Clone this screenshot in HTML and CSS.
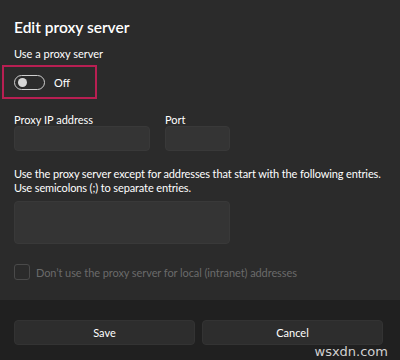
FILE: index.html
```html
<!DOCTYPE html>
<html>
<head>
<meta charset="utf-8">
<link rel="stylesheet" href="styles.css">
</head>
<body>
<div class="dialog">
  <div class="content">
    <h1 class="title">Edit proxy server</h1>
    <div class="label first">Use a proxy server</div>
    <div class="highlight">
      <div class="toggle"><span class="knob"></span></div>
      <span class="toggle-text">Off</span>
    </div>
    <div class="fields">
      <div class="field">
        <div class="label">Proxy IP address</div>
        <div class="input ip"></div>
      </div>
      <div class="field">
        <div class="label">Port</div>
        <div class="input port"></div>
      </div>
    </div>
    <p class="desc">Use the proxy server except for addresses that start with the following entries.<br>Use semicolons (;) to separate entries.</p>
    <div class="input big"></div>
    <div class="check-row">
      <span class="checkbox"></span>
      <span class="check-text">Don’t use the proxy server for local (intranet) addresses</span>
    </div>
  </div>
  <div class="footer">
    <div class="btn">Save</div>
    <div class="btn">Cancel</div>
    <span class="watermark">wsxdn.com</span>
  </div>
</div>
</body>
</html>
```
FILE: styles.css
```css
html, body {
  margin: 0;
  padding: 0;
  background: #2b2b2b;
}
body {
  width: 400px;
  height: 360px;
  overflow: hidden;
  font-family: Lato, "Open Sans", sans-serif;
  color: #ffffff;
}
.dialog {
  display: flex;
  flex-direction: column;
  height: 360px;
}
.content {
  flex: 0 0 300px;
  box-sizing: border-box;
  padding: 17px 14px 0 14px;
  display: flex;
  flex-direction: column;
}
.title {
  margin: 0;
  font-size: 15.5px;
  font-weight: 600;
  line-height: 20px;
}
.label {
  font-size: 11px;
  line-height: 12px;
}
.label.first {
  margin-top: 11px;
}
.highlight {
  margin: 5px 0 0 -12px;
  width: 81px;
  height: 30px;
  border: 2px solid #b81f52;
  display: flex;
  align-items: center;
  padding-left: 10px;
  gap: 9px;
}
.toggle {
  position: relative;
  width: 29px;
  height: 13px;
  border: 1px solid #cfcfcf;
  border-radius: 8px;
  box-sizing: content-box;
}
.knob {
  position: absolute;
  left: 3px;
  top: 2px;
  width: 9px;
  height: 9px;
  border-radius: 50%;
  background: #d6d6d6;
}
.toggle-text {
  font-size: 11px;
}
.fields {
  display: flex;
  gap: 15px;
  margin-top: 15px;
}
.input {
  background: #343434;
  border: 1px solid #393939;
  border-radius: 4px;
  box-sizing: border-box;
}
.ip { width: 136px; height: 25px; }
.port { width: 65px; height: 25px; }
.desc {
  margin: 16px 0 0 0;
  font-size: 11px;
  line-height: 14px;
  letter-spacing: -0.12px;
  white-space: nowrap;
}
.big {
  width: 216px;
  height: 43px;
  margin-top: 6px;
}
.check-row {
  display: flex;
  align-items: center;
  gap: 6px;
  margin-top: 20px;
}
.checkbox {
  width: 16px;
  height: 16px;
  box-sizing: border-box;
  border: 1px solid #4a4a4a;
  border-radius: 3px;
}
.check-text {
  font-size: 11px;
  color: #6a6a6a;
  letter-spacing: -0.08px;
}
.footer {
  position: relative;
  flex: 1;
  background: #202020;
  display: flex;
  gap: 7px;
  padding: 20px 17px 0 14px;
  box-sizing: border-box;
}
.btn {
  flex: 1;
  height: 25px;
  background: #2d2d2d;
  border: 1px solid #333333;
  border-radius: 4px;
  box-sizing: border-box;
  display: flex;
  align-items: center;
  justify-content: center;
  font-size: 11px;
}
.watermark {
  position: absolute;
  right: 12px;
  bottom: 1px;
  font-family: "DejaVu Sans", sans-serif;
  font-size: 13px;
  color: #d0d0d0;
}
```
